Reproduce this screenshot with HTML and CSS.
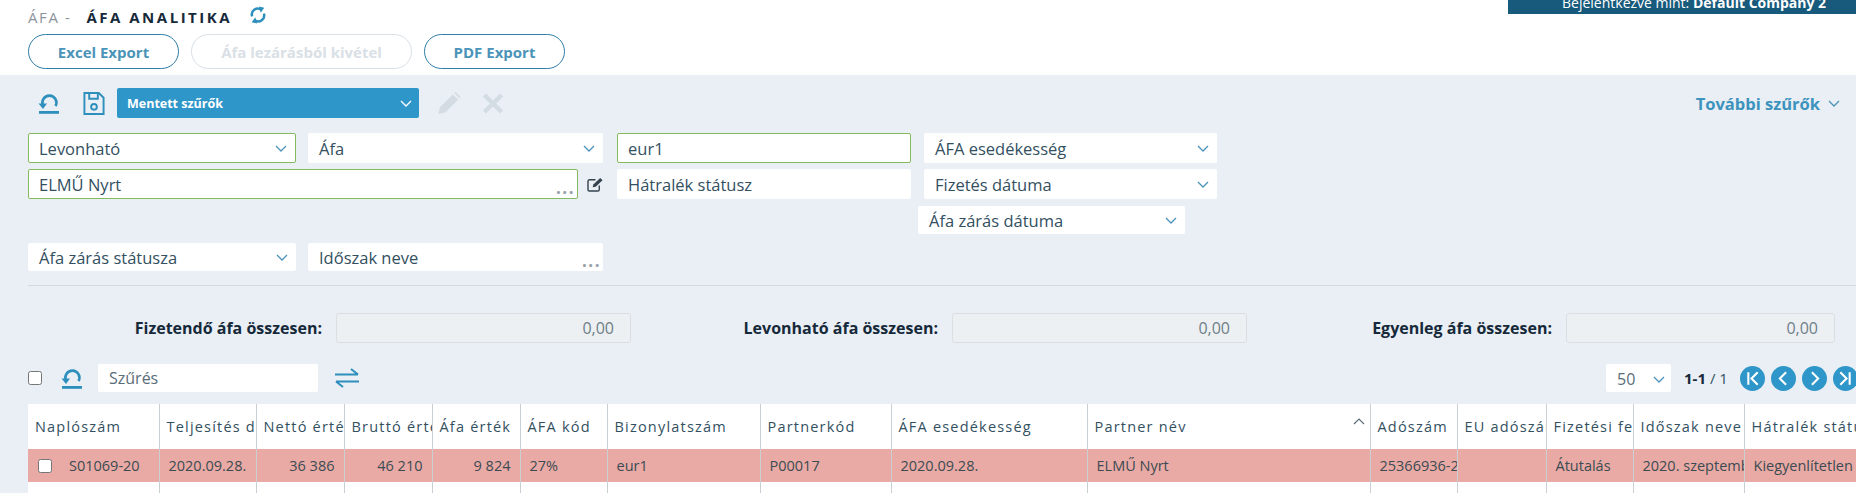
FILE: index.html
```html
<!DOCTYPE html>
<html lang="hu">
<head>
<meta charset="utf-8">
<title>Áfa analitika</title>
<link rel="stylesheet" href="styles.css">
</head>
<body>
<header class="header">
  <div class="title-row">
    <h1 class="title"><span class="crumb">ÁFA -</span><span class="page">ÁFA ANALITIKA</span>
      <svg class="refresh" viewBox="0 0 20 20"><path d="M3.500 11.500A6.500 6.500 0 0 1 13.500 4.200M16.500 8.500A6.500 6.500 0 0 1 6.500 15.800" fill="none" stroke="#2e8fbd" stroke-width="2.800"/><path d="M11 0.500l6 1.500L13 7.500zM9 19.500l-6-1.500L7 12.500z" fill="#2e8fbd"/></svg>
    </h1>
    <div class="login">Bejelentkezve mint:&nbsp;<b>Default Company 2</b></div>
  </div>
  <div class="buttons">
    <button class="btn btn-excel">Excel Export</button>
    <button class="btn btn-off">Áfa lezárásból kivétel</button>
    <button class="btn btn-pdf">PDF Export</button>
  </div>
</header>
<main class="panel">
  <div class="tools">
    <svg class="ico-reset" viewBox="0 0 22 21"><path d="M5 12.500A7 7 0 1 1 17.500 13" fill="none" stroke="#2e8fbd" stroke-width="2.600"/><path d="M0.500 10.500h8.500L5 16z" fill="#2e8fbd"/><rect x="1" y="18" width="20" height="2.800" fill="#2e8fbd"/></svg>
    <svg class="ico-save" viewBox="0 0 22 24"><path d="M1 1h15l5 5v17H1z" fill="none" stroke="#2e8fbd" stroke-width="2"/><path d="M6 1v6h9V1" fill="none" stroke="#2e8fbd" stroke-width="2"/><circle cx="11" cy="15.500" r="3" fill="none" stroke="#2e8fbd" stroke-width="2"/></svg>
    <div class="saved">Mentett szűrők<svg class="chev chev-white" viewBox="0 0 12 7"><path d="M1 1l5 5 5-5"/></svg></div>
    <svg class="ico-pencil" viewBox="0 0 24 24"><path d="M1 23l1.500-7L16 2.500l5.500 5.500L8 21.500zM17.500 1l5.500 5.500 1-1L19 0z" fill="#d3dbe3"/></svg>
    <svg class="ico-x" viewBox="0 0 22 22"><path d="M2 2l18 18M20 2L2 20" stroke="#d3dbe3" stroke-width="4.500" fill="none"/></svg>
    <div class="more">További szűrők<svg class="chev" viewBox="0 0 12 7"><path d="M1 1l5 5 5-5"/></svg></div>
  </div>
  <div class="filters">
    <div class="row r1">
      <div class="field w-a ok">Levonható<svg class="chev" viewBox="0 0 12 7"><path d="M1 1l5 5 5-5"/></svg></div>
      <div class="field w-e">Áfa<svg class="chev" viewBox="0 0 12 7"><path d="M1 1l5 5 5-5"/></svg></div>
      <div class="field w-c ok">eur1</div>
      <div class="field w-b">ÁFA esedékesség<svg class="chev" viewBox="0 0 12 7"><path d="M1 1l5 5 5-5"/></svg></div>
    </div>
    <div class="row r2">
      <div class="field w-wide ok">ELMŰ Nyrt<span class="dots">...</span></div>
      <svg class="ico-edit" viewBox="0 0 18 16"><path d="M13 9v4.500a1.500 1.500 0 0 1-1.500 1.500h-9A1.500 1.500 0 0 1 1 13.500v-9A1.500 1.500 0 0 1 2.500 3H9" fill="none" stroke="#33424d" stroke-width="1.500"/><path d="M6 11l.7-3L14 1l2.500 2.500L9.200 10.500z" fill="#33424d"/></svg>
      <div class="field w-c">Hátralék státusz</div>
      <div class="field w-b">Fizetés dátuma<svg class="chev" viewBox="0 0 12 7"><path d="M1 1l5 5 5-5"/></svg></div>
    </div>
    <div class="row r3">
      <div class="field w-d">Áfa zárás dátuma<svg class="chev" viewBox="0 0 12 7"><path d="M1 1l5 5 5-5"/></svg></div>
    </div>
    <div class="row r4">
      <div class="field w-a">Áfa zárás státusza<svg class="chev" viewBox="0 0 12 7"><path d="M1 1l5 5 5-5"/></svg></div>
      <div class="field w-e">Időszak neve<span class="dots">...</span></div>
    </div>
  </div>
  <hr class="divider">
  <div class="totals">
    <label class="t-label t1">Fizetendő áfa összesen:</label><div class="t-box b1">0,00</div>
    <label class="t-label t2">Levonható áfa összesen:</label><div class="t-box b1">0,00</div>
    <label class="t-label t3">Egyenleg áfa összesen:</label><div class="t-box b3">0,00</div>
  </div>
  <div class="list-bar">
    <span class="check"></span>
    <svg class="ico-reset small" viewBox="0 0 22 21"><path d="M5 12.500A7 7 0 1 1 17.500 13" fill="none" stroke="#2e8fbd" stroke-width="2.600"/><path d="M0.500 10.500h8.500L5 16z" fill="#2e8fbd"/><rect x="1" y="18" width="20" height="2.800" fill="#2e8fbd"/></svg>
    <div class="search">Szűrés</div>
    <svg class="ico-swap" viewBox="0 0 26 20"><path d="M1 6.500h23M17 1l7 5.500M25 13.500H2M9 19l-7-5.500" fill="none" stroke="#2e8fbd" stroke-width="2"/></svg>
    <div class="pager">
      <div class="size">50<svg class="chev" viewBox="0 0 12 7"><path d="M1 1l5 5 5-5"/></svg></div>
      <div class="count"><b>1-1</b> / 1</div>
      <span class="pg"><svg viewBox="0 0 24 24"><path d="M8 6v12M17 6l-6 6 6 6"/></svg></span>
      <span class="pg"><svg viewBox="0 0 24 24"><path d="M14.500 6l-6 6 6 6"/></svg></span>
      <span class="pg"><svg viewBox="0 0 24 24"><path d="M9.500 6l6 6-6 6"/></svg></span>
      <span class="pg"><svg viewBox="0 0 24 24"><path d="M16 6v12M7 6l6 6-6 6"/></svg></span>
    </div>
  </div>
  <table class="grid">
    <colgroup>
      <col class="c1"><col class="c2"><col class="c3"><col class="c3"><col class="c3"><col class="c6"><col class="c7"><col class="c8"><col class="c9"><col class="c10"><col class="c11"><col class="c12"><col class="c11"><col class="c14"><col class="c15">
    </colgroup>
    <thead>
      <tr>
        <th>Naplószám</th><th>Teljesítés d</th><th>Nettó érték</th><th>Bruttó érték</th><th>Áfa érték</th><th>ÁFA kód</th><th>Bizonylatszám</th><th>Partnerkód</th><th>ÁFA esedékesség</th>
        <th>Partner név<svg class="sort" viewBox="0 0 12 7"><path d="M1 6l5-5 5 5"/></svg></th>
        <th>Adószám</th><th>EU adószám</th><th>Fizetési felület</th><th>Időszak neve</th><th>Hátralék státusz</th>
      </tr>
    </thead>
    <tbody>
      <tr class="hit">
        <td><span class="check in-row"></span>S01069-20</td><td>2020.09.28.</td><td class="num">36 386</td><td class="num">46 210</td><td class="num">9 824</td><td>27%</td><td>eur1</td><td>P00017</td><td>2020.09.28.</td><td>ELMŰ Nyrt</td><td>25366936-2-42</td><td></td><td>Átutalás</td><td>2020. szeptember</td><td>Kiegyenlítetlen</td>
      </tr>
      <tr class="blank">
        <td></td><td></td><td></td><td></td><td></td><td></td><td></td><td></td><td></td><td></td><td></td><td></td><td></td><td></td><td></td>
      </tr>
    </tbody>
  </table>
</main>
</body>
</html>
```
FILE: styles.css
```css
* { box-sizing: border-box; }
html, body { margin: 0; height: 493px; overflow: hidden; background: #fff; }
body { font-family: "Open Sans", "Noto Sans", sans-serif; color: #33505f; width: 1856px; }

.header { height: 75px; padding-left: 28px; }
.title-row { height: 34px; display: flex; justify-content: space-between; align-items: flex-start; }
.title { margin: 8px 0 0; font-size: 15px; line-height: 18px; font-weight: 400; display: flex; align-items: center; letter-spacing: 1.600px; }
.crumb { color: #8b949b; margin-right: 15px; }
.page { color: #16293a; font-weight: 700; letter-spacing: 2.500px; }
.refresh { width: 20px; height: 18px; margin-left: 16px; margin-top: -4px; }
.login { width: 348px; height: 14px; background: #175a7c; color: #fff; font-size: 14px; line-height: 14px; padding: 0 20px 4px 54px; display: flex; align-items: flex-end; white-space: nowrap; overflow: hidden; }
.login b { font-weight: 700; }

.buttons { display: flex; gap: 12px; }
.btn { height: 35px; border-radius: 18px; background: #fff; border: 1px solid #2e7ea8; color: #4b94b9; font: 700 15px "Open Sans", sans-serif; padding: 0; }
.btn-excel { width: 151px; }
.btn-off { width: 221px; border-color: #d9e0e6; color: #d9e0e6; }
.btn-pdf { width: 141px; }

.panel { background: #e9eff4; height: 418px; padding-top: 13px; }
.tools { height: 30px; display: flex; align-items: center; padding: 0 16px 0 38px; }
.ico-reset { width: 22px; height: 21px; flex: none; }
.ico-save { width: 22px; height: 23px; margin-left: 23px; }
.saved { width: 302px; height: 30px; margin-left: 12px; border-radius: 2px; background: #2e96c8; color: #fff; font-size: 12.500px; font-weight: 700; display: flex; align-items: center; justify-content: space-between; padding: 0 7px 0 10px; }
.ico-pencil { width: 24px; height: 23px; margin-left: 18px; }
.ico-x { width: 22px; height: 21px; margin-left: 21px; }
.more { margin-left: auto; color: #3c93bd; font-size: 16.500px; font-weight: 700; display: flex; align-items: center; gap: 8px; }

.chev { width: 12px; height: 7px; flex: none; fill: none; stroke: #4b94b9; stroke-width: 1.300; }
.chev-white { stroke: #fff; }

.filters { margin-top: 15px; padding-left: 28px; }
.row { display: flex; }
.r1 { height: 30px; gap: 12px; }
.r2 { height: 30px; margin-top: 6px; gap: 12px; align-items: center; }
.r1 .w-c { margin: 0 1px 0 2px; }
.r2 .w-c { margin: 0 1px 0 1px; }
.r3 { height: 28px; margin-top: 7px; padding-left: 890px; }
.r4 { height: 28px; margin-top: 9px; gap: 12px; }
.field { position: relative; background: #fff; border-radius: 2px; height: 100%; font-size: 16.500px; display: flex; align-items: center; justify-content: space-between; padding: 0 8px 0 11px; color: #33505f; }
.ok { border: 1px solid #84bb5c; padding-left: 10px; }
.w-a { width: 268px; }
.w-b { width: 293px; }
.w-c { width: 294px; }
.w-d { width: 267px; }
.w-e { width: 295px; }
.w-wide { width: 550px; }
.ico-edit { width: 17px; height: 15px; margin-left: -3px; flex: none; }
.dots { position: absolute; right: 2px; bottom: 4px; color: #98a2aa; font-weight: 700; font-size: 17px; line-height: 12px; letter-spacing: 1.500px; }

.divider { margin: 14px 0 0 28px; border: 0; border-top: 1px solid #d3dade; }
.totals { height: 30px; margin-top: 27px; display: flex; align-items: center; }
.t-label { text-align: right; color: #16293a; font-size: 16px; font-weight: 700; white-space: nowrap; flex: none; }
.t1 { width: 322px; }
.t2 { width: 307px; }
.t3 { width: 305px; }
.t-box { height: 30px; margin-left: 14px; background: #ecf0f2; border: 1px solid #d9dfe3; border-radius: 3px; text-align: right; font-size: 16px; line-height: 28px; color: #6f7f89; padding-right: 16px; flex: none; }
.b1 { width: 295px; }
.b3 { width: 269px; }

.list-bar { height: 28px; margin-top: 21px; padding-left: 28px; display: flex; align-items: center; }
.check { width: 14px; height: 14px; border: 1px solid #767676; border-radius: 2.500px; background: #fff; display: block; flex: none; }
.small { margin-left: 19px; }
.search { width: 220px; height: 28px; margin-left: 15px; background: #fff; border-radius: 2px; font-size: 16px; line-height: 28px; padding-left: 11px; color: #5a6d78; flex: none; }
.ico-swap { width: 26px; height: 20px; margin-left: 16px; flex: none; }
.pager { margin-left: auto; display: flex; align-items: center; width: 250px; flex: none; }
.size { width: 65px; height: 28px; background: #fff; border-radius: 2px; font-size: 16px; display: flex; align-items: center; justify-content: space-between; padding: 2px 6px 0 11px; color: #5a6d78; flex: none; }
.count { margin-left: 13px; font-size: 15px; width: 56px; color: #33505f; flex: none; white-space: nowrap; }
.count b { color: #16293a; }
.pg { width: 25px; height: 25px; border-radius: 50%; background: #2e96c8; margin-right: 6px; flex: none; display: flex; }
.pg svg { fill: none; stroke: #fff; stroke-width: 2; width: 25px; height: 25px; }

.grid { margin: 12px 0 0 28px; width: 1916px; border-collapse: collapse; table-layout: fixed; background: #fff; }
.c1 { width: 131px; } .c2 { width: 97px; } .c3 { width: 88px; } .c6 { width: 87px; } .c7 { width: 153px; } .c8 { width: 131px; } .c9 { width: 196px; } .c10 { width: 283px; } .c11 { width: 87px; } .c12 { width: 89px; } .c14 { width: 111px; } .c15 { width: 200px; }
.grid th { height: 45px; padding: 0 0 0 7px; text-align: left; font-size: 14.500px; font-weight: 400; letter-spacing: 1.200px; color: #33505f; white-space: nowrap; overflow: hidden; border-right: 1px solid #c8d0d6; position: relative; }
.grid td { padding: 0 0 0 9px; font-size: 14.500px; color: #3c4a52; white-space: nowrap; overflow: hidden; border-right: 1px solid #c8d0d6; }
.hit td { height: 33px; background: #e9aaa5; }
.blank td { height: 11px; padding: 0; }
.grid td.num { text-align: right; padding-right: 9px; }
.in-row { display: inline-block; vertical-align: -2px; margin: 0 17px 0 1px; }
.sort { position: absolute; right: 5px; top: 14px; width: 12px; height: 7px; fill: none; stroke: #5a6d78; stroke-width: 1.200; }
```
